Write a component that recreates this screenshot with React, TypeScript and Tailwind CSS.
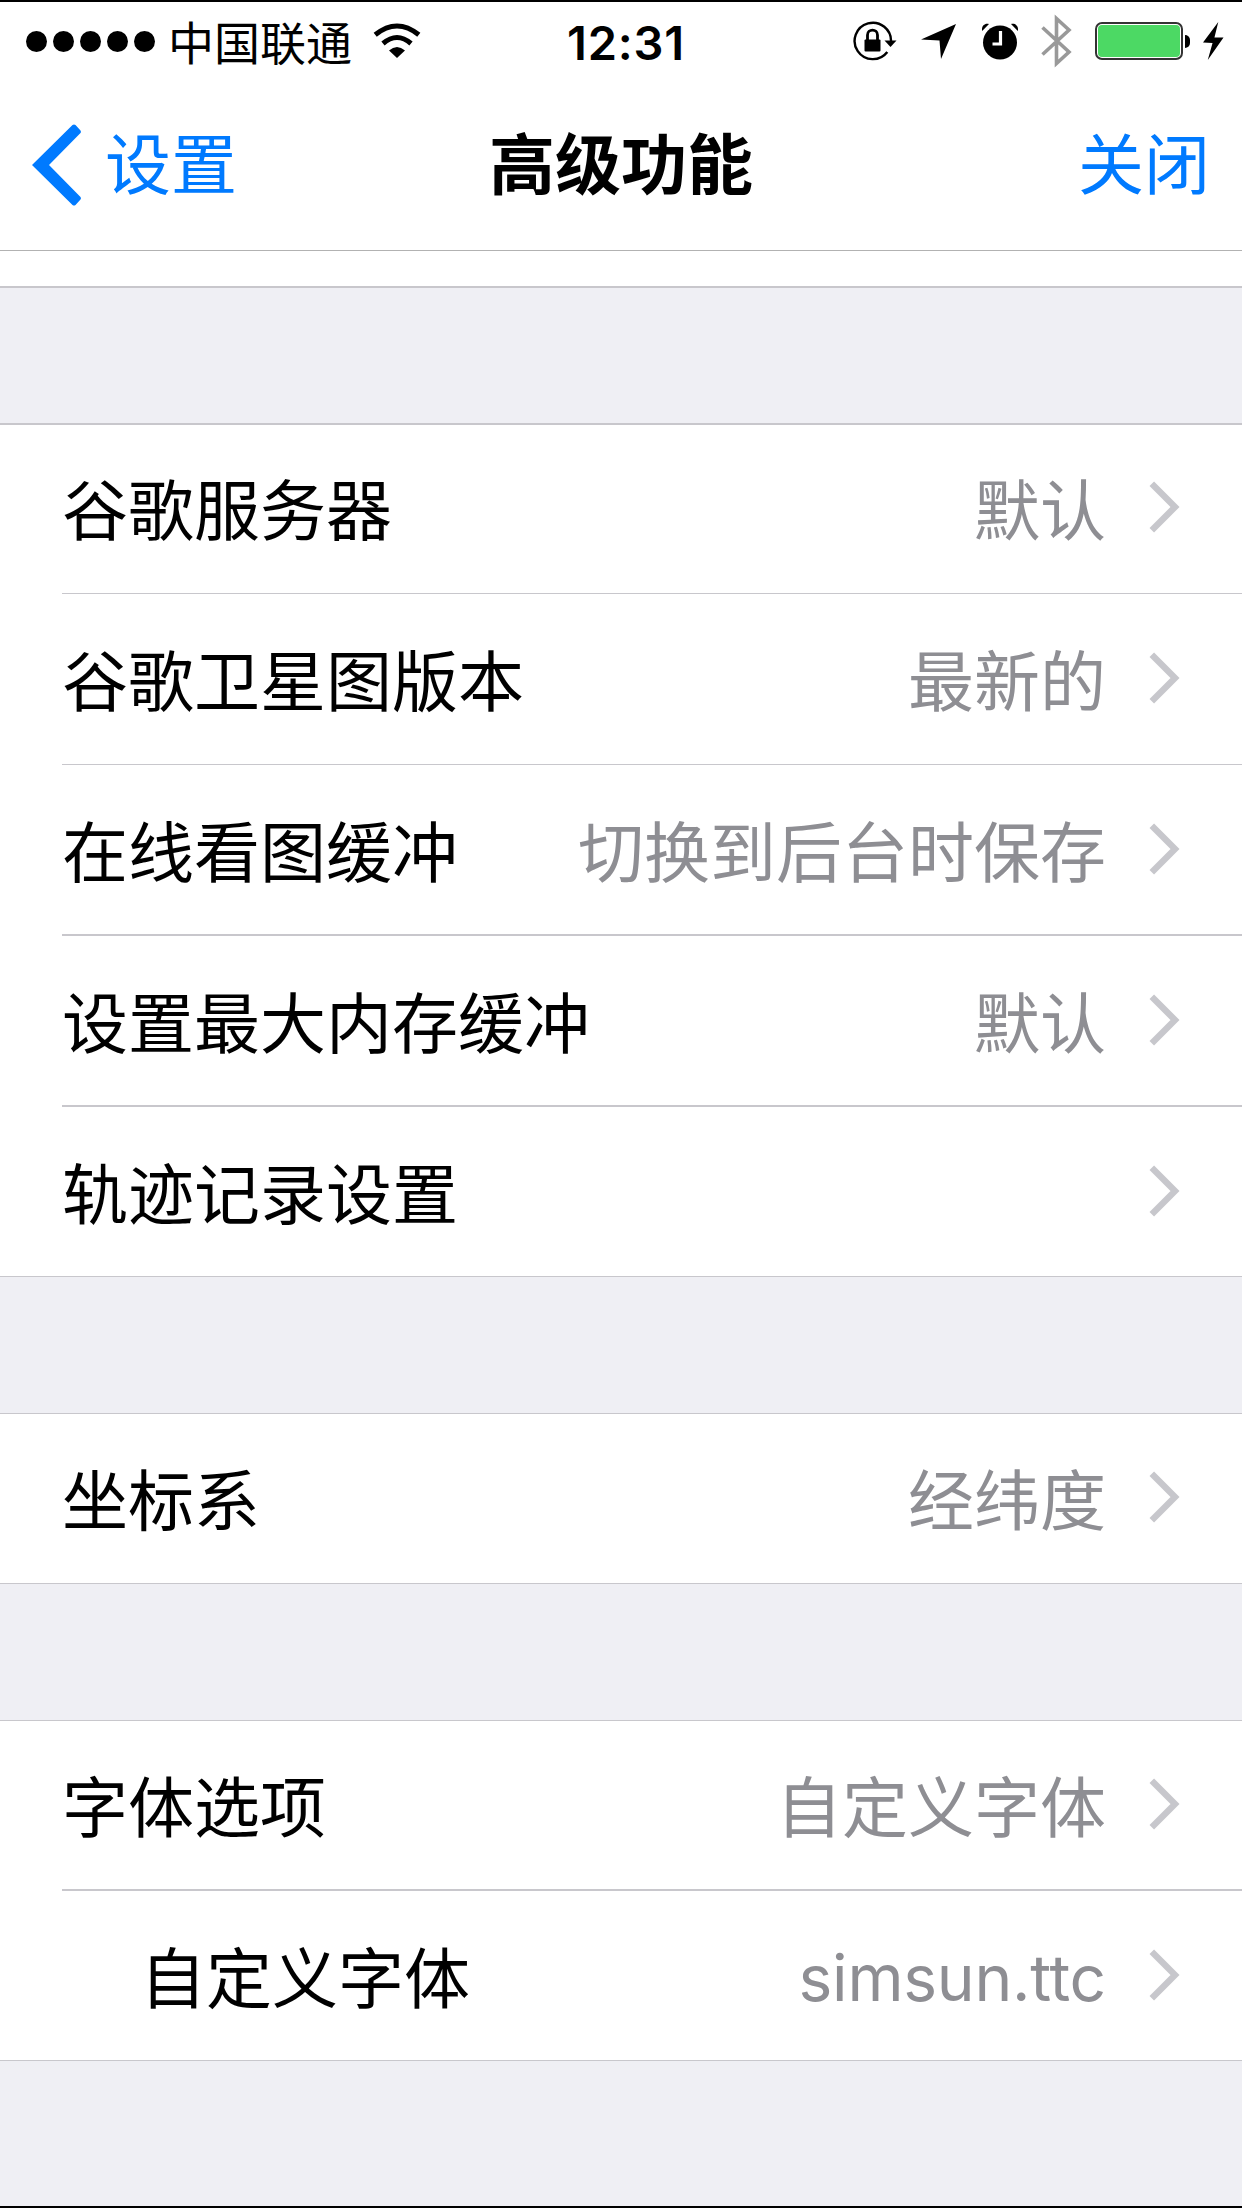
import React from 'react';

function Chevron() {
  return (
    <svg className="ml-[43px] h-[52px] w-[31px] shrink-0" viewBox="0 0 31 52" fill="none" stroke="#c7c7cc" strokeWidth="6.4">
      <path d="M2.8 2.8 L26 26 L2.8 49.2" />
    </svg>
  );
}

type RowProps = { label: string; value?: string; height: string; line?: string; content?: string; indent?: boolean; latin?: boolean };

function Row({ label, value = '', height, line = '', content = 'h-[167px]', indent = false, latin = false }: RowProps) {
  return (
    <div className={`pl-[62px] ${height}`}>
      <div className={`h-full border-[#c8c7cc] ${line} ${indent ? 'pl-[78px]' : ''}`}>
        <div className={`flex items-center pr-[62px] ${content}`}>
          <span className="grow -translate-y-[1px]">{label}</span>
          <span className={latin ? "translate-y-[3px] font-['Inter'] text-[64px] tracking-[-0.2px] text-[#8e8e93]" : '-translate-y-[1px] text-[#8e8e93]'}>{value}</span>
          <Chevron />
        </div>
      </div>
    </div>
  );
}

function Wifi() {
  return (
    <svg className="ml-[21px] h-[36px] w-[48px]" viewBox="0 0 48 36" fill="none" stroke="#000" strokeWidth="5">
      <path d="M2.2 11.8 Q24 -5.8 45.8 11.8" />
      <path d="M10 20.5 Q24 8.5 38 20.5" />
      <path d="M16 27.5 Q24 20.5 32 27.5 L24 35 Z" fill="#000" stroke="none" />
    </svg>
  );
}

function StatusIcons() {
  return (
    <div className="flex h-full items-center">
      <svg className="h-[40px] w-[46px]" viewBox="0 0 46 40" fill="none" stroke="#000" strokeWidth="2.4">
        <path d="M38 21 A18.2 18.2 0 1 0 34.3 31" />
        <path d="M31.5 19.5 H43.5 L37.5 26 Z" fill="#000" stroke="none" />
        <path d="M14.5 20 V14 C14.5 7.5 24.5 7.5 24.5 14 V20" strokeWidth="2.8" />
        <rect x="11.5" y="18.5" width="16" height="12" rx="1" fill="#000" stroke="none" />
      </svg>
      <svg className="ml-[22px] h-[38px] w-[36px]" viewBox="0 0 36 38"><path d="M35 2 L20 37 L18.5 18.5 L0 17.5 Z" /></svg>
      <svg className="ml-[24px] h-[38px] w-[38px]" viewBox="0 0 38 38">
        <circle cx="19" cy="20.5" r="17" />
        <path d="M1.2 9 C0 4 4 0.5 8 2 Z M36.8 9 C38 4 34 0.5 30 2 Z" />
        <path d="M11.5 22 H19.5 V9" fill="none" stroke="#fff" strokeWidth="3.2" />
      </svg>
      <svg className="ml-[22px] h-[54px] w-[32px]" viewBox="0 0 32 54" fill="none" stroke="#999" strokeWidth="3.6">
        <path d="M1.5 13.5 L28 38 L15.5 49.5 V4.5 L28 16 L1.5 40.5" />
      </svg>
      <div className="ml-[22px] h-[38px] w-[88px] rounded-[7px] border-2 border-[#333] p-[1px]">
        <div className="h-full rounded-[4px] bg-[#4cd964]" />
      </div>
      <div className="ml-[2px] h-[13px] w-[5px] rounded-r-full bg-black" />
      <svg className="ml-[13px] h-[38px] w-[21px]" viewBox="0 0 22 38" preserveAspectRatio="none"><path d="M16 0 L0 20.5 L10 21 L5 38 L21.5 15.5 L12 15.5 Z" /></svg>
    </div>
  );
}

export default function App() {
  return (
    <main className="flex h-[2208px] w-[1242px] flex-col overflow-hidden border-y-2 border-black bg-[#efeff4] font-['Noto_Sans_CJK_SC',sans-serif] text-[66px] leading-none text-black">
      <header className="flex h-[249px] shrink-0 flex-col border-b border-[#b2b2b2] bg-white">
        <div className="grid h-[78px] grid-cols-[1fr_auto_1fr] items-center pr-[18px] pl-[26px]">
          <div className="flex items-center">
            <div className="flex gap-[6px]">
              {[0, 1, 2, 3, 4].map((dot) => <i key={dot} className="size-[21px] rounded-full bg-black" />)}
            </div>
            <span className="ml-[13px] -translate-y-[1px] text-[46px]">中国联通</span>
            <Wifi />
          </div>
          <span className="translate-x-[1px] translate-y-[1px] font-['Inter'] text-[47px] font-semibold tracking-[0.8px]">12:31</span>
          <div className="flex h-full justify-end"><StatusIcons /></div>
        </div>
        <div className="grid h-[162px] grid-cols-[1fr_auto_1fr] items-center pr-[32px] pl-[32px] text-[#007aff]">
          <span className="flex items-center">
            <svg className="mt-[7px] h-[82px] w-[50px]" viewBox="0 0 50 82" fill="#007aff"><path d="M0 41 L40.5 1 Q42 0 43.5 1 L48.5 6.5 Q49.5 8 48.5 9 L17 41 L48.5 73 Q49.5 74 48.5 75.5 L43.5 81 Q42 82 40.5 81 Z" /></svg>
            <span className="ml-[23px] -translate-y-[1px]">设置</span>
          </span>
          <span className="-translate-y-[1px] font-bold text-black">高级功能</span>
          <span className="-translate-y-[1px] text-right">关闭</span>
        </div>
      </header>
      <div className="h-[37px] shrink-0 border-b-2 border-[#c8c7cc] bg-white" />
      <section className="mt-[135px] border-t-2 border-b border-[#c8c7cc] bg-white">
        <Row label="谷歌服务器" value="默认" height="h-[169px]" line="border-b" content="h-[164px]" />
        <Row label="谷歌卫星图版本" value="最新的" height="h-[171px]" line="border-b" />
        <Row label="在线看图缓冲" value="切换到后台时保存" height="h-[171px]" line="border-b-2" />
        <Row label="设置最大内存缓冲" value="默认" height="h-[171px]" line="border-b-2" />
        <Row label="轨迹记录设置" height="h-[169px]" />
      </section>
      <section className="mt-[136px] border-y border-[#c8c7cc] bg-white">
        <Row label="坐标系" value="经纬度" height="h-[169px]" content="h-[165px]" />
      </section>
      <section className="mt-[136px] border-y border-[#c8c7cc] bg-white">
        <Row label="字体选项" value="自定义字体" height="h-[170px]" line="border-b-2" content="h-[165px]" />
        <Row label="自定义字体" value="simsun.ttc" height="h-[169px]" indent latin />
      </section>
    </main>
  );
}
